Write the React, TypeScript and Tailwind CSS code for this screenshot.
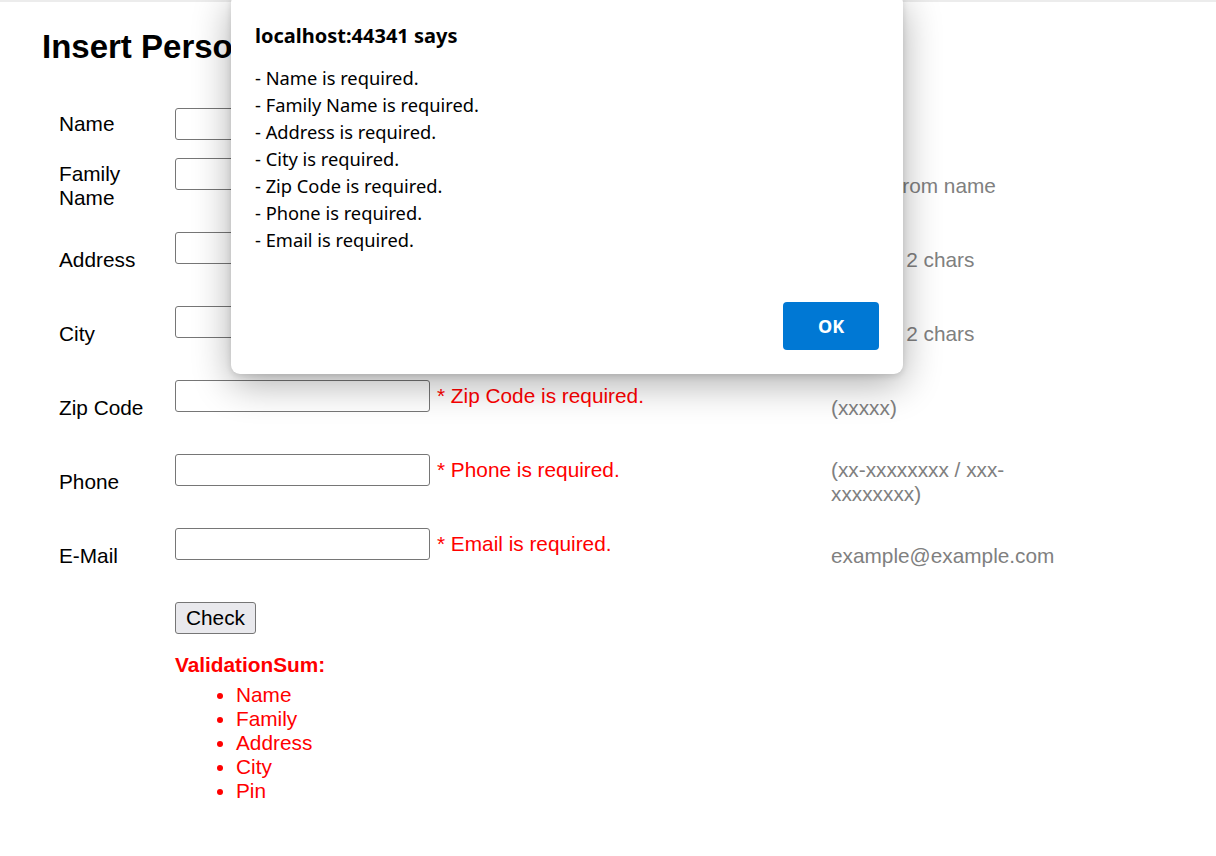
import React from "react";

interface Row {
  label: string[];
  error: string;
  hint: string[];
  tall: boolean;
}

const rows: Row[] = [
  { label: ["Name"], error: "* Name is required.", hint: [], tall: false },
  { label: ["Family", "Name"], error: "* Family Name is required.", hint: ["Differs from name"], tall: true },
  { label: ["Address"], error: "* Address is required.", hint: ["At least 2 chars"], tall: true },
  { label: ["City"], error: "* City is required.", hint: ["At least 2 chars"], tall: true },
  { label: ["Zip Code"], error: "* Zip Code is required.", hint: ["(xxxxx)"], tall: true },
  { label: ["Phone"], error: "* Phone is required.", hint: ["(xx-xxxxxxxx / xxx-", "xxxxxxxx)"], tall: true },
  { label: ["E-Mail"], error: "* Email is required.", hint: ["example@example.com"], tall: true },
];

const messages = [
  "- Name is required.",
  "- Family Name is required.",
  "- Address is required.",
  "- City is required.",
  "- Zip Code is required.",
  "- Phone is required.",
  "- Email is required.",
];

const summary = ["Name", "Family", "Address", "City", "Pin"];

const FormRow = ({ row }: { row: Row }) => (
  <div className={`flex ${row.tall ? "h-[60px]" : "h-[36px]"}`}>
    <div className="w-[116px] flex flex-col justify-center leading-[24px]">
      {row.label.map((l) => (
        <span key={l}>{l}</span>
      ))}
    </div>
    <div className="w-[656px] pt-[2px]">
      <div className="flex items-center h-[32px]">
        <input
          type="text"
          className="w-[255px] h-[32px] border border-[#767676] rounded-[3px] bg-white"
        />
        <span className="ml-[7px] text-[#ff0000]">{row.error}</span>
      </div>
    </div>
    <div className="w-[235px] flex flex-col justify-center leading-[24px] text-[#808080]">
      {row.hint.map((h) => (
        <span key={h}>{h}</span>
      ))}
    </div>
  </div>
);

// browser alert() box sitting over the page
const AlertBox = () => (
  <div
    className="absolute left-[231px] top-[-8px] w-[672px] h-[380px] bg-white rounded-[9px]
      shadow-[0_10px_38px_rgba(0,0,0,0.32),0_2px_6px_rgba(0,0,0,0.12)]
      px-[24px] pt-[29px] pb-[24px] flex flex-col text-black"
    style={{ fontFamily: '"Noto Sans", "Open Sans", sans-serif' }}
  >
    <div className="text-[20px] font-bold leading-[26px]">localhost:44341 says</div>
    <div className="mt-[15px] text-[18.3px] leading-[27px]">
      {messages.map((m) => (
        <div key={m}>{m}</div>
      ))}
    </div>
    <div className="mt-auto flex justify-end">
      <button className="w-[96px] h-[48px] rounded-[4px] bg-[#0078d4] text-white text-[18px] font-bold">
        OK
      </button>
    </div>
  </div>
);

export default function App() {
  return (
    <div
      className="relative min-h-[856px] bg-white border-t-2 border-[#ececec] text-[20.8px] text-black"
      style={{ fontFamily: '"Liberation Sans", Arial, sans-serif' }}
    >
      <h1 className="ml-[42px] mt-[26px] text-[33px] font-bold leading-[37px]">Insert Person</h1>

      <div className="mt-[41px] pl-[59px] flex flex-col gap-[14px]">
        {rows.map((r) => (
          <FormRow key={r.label.join(" ")} row={r} />
        ))}

        <div className="pl-[116px] pt-[2px]">
          <button className="w-[81px] h-[32px] bg-[#e9e9ed] border border-[#767676] rounded-[3px] leading-none">
            Check
          </button>
          <div className="mt-[19px] font-bold text-[#ff0000] leading-[24px]">ValidationSum:</div>
          <ul className="mt-[6px] pl-[61px] list-disc text-[#ff0000] leading-[24px]">
            {summary.map((s) => (
              <li key={s}>{s}</li>
            ))}
          </ul>
        </div>
      </div>

      <AlertBox />
    </div>
  );
}
